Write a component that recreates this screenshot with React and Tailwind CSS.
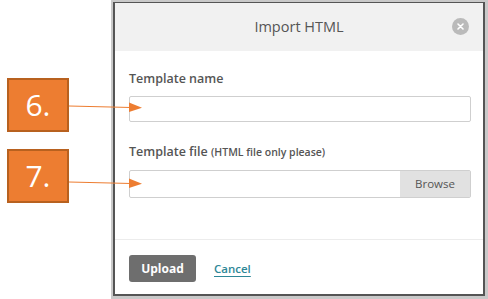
import React from 'react';

const font = { fontFamily: '"Open Sans", "Noto Sans", sans-serif' };

function Callout({ label }) {
  return (
    <div className="w-[62px] h-[54px] bg-[#ed7d31] border-2 border-[#b8611f] flex items-center justify-center text-white text-[30px] leading-none">
      {label}
    </div>
  );
}

function Arrow({ top }) {
  return (
    <svg className="absolute left-[69px]" style={{ top }} width="74" height="12" viewBox="0 0 74 12">
      <line x1="0" y1="5" x2="62" y2="6.5" stroke="#ed7d31" strokeWidth="1.2" />
      <polygon points="60,1.5 73,6.8 60,11" fill="#ed7d31" />
    </svg>
  );
}

export default function App() {
  return (
    <div className="relative w-[488px] h-[299px] bg-white flex overflow-hidden" style={font}>
      {/* Callouts column */}
      <div className="w-[111px] shrink-0 pl-[7px] pt-[78px] flex flex-col gap-[17px]">
        <Callout label="6." />
        <Callout label="7." />
      </div>

      {/* Dialog */}
      <div className="w-[377px] h-[299px] border-2 border-[#c9c9c9] border-r-[3px] border-b-[3px]">
        <div className="h-full border-2 border-[#555] border-t border-b-2 flex flex-col bg-white">
          <div className="relative h-[48px] bg-[#f1f1f1] flex items-center justify-center shrink-0">
            <span className="text-[14.5px] text-[#555] font-medium">Import HTML</span>
            <div className="absolute right-[14px] top-[15px] w-[17px] h-[17px] rounded-full bg-[#bababa] flex items-center justify-center">
              <svg width="7" height="7" viewBox="0 0 7 7">
                <path d="M1 1 L6 6 M6 1 L1 6" stroke="white" strokeWidth="1.6" strokeLinecap="round" />
              </svg>
            </div>
          </div>

          <div className="pl-[14px] pr-[12px] pt-[19px] flex flex-col">
            <div className="text-[12.5px] font-semibold text-[#555] leading-[18px]">Template name</div>
            <div className="mt-[8px] h-[26px] border border-[#cfcfcf] rounded-[2px] bg-white" />

            <div className="mt-[19px] leading-[18px] text-[#555]">
              <span className="text-[12.5px] font-semibold">Template file </span>
              <span className="text-[10.5px] font-semibold">(HTML file only please)</span>
            </div>
            <div className="mt-[9px] h-[28px] border border-[#cfcfcf] rounded-[2px] bg-white flex">
              <div className="flex-1" />
              <div className="w-[70px] bg-[#e1e1e1] flex items-center justify-center text-[11.5px] text-[#555] font-medium">
                Browse
              </div>
            </div>
          </div>

          <div className="mt-[41px] border-t border-[#ececec]" />

          <div className="pl-[14px] pt-[15px] flex items-center gap-[18px]">
            <div className="w-[67px] h-[27px] rounded-[3px] bg-[#6e6e6e] flex items-center justify-center text-white text-[12px] font-bold">
              Upload
            </div>
            <span className="text-[11.5px] font-semibold text-[#2e8797] underline underline-offset-[3px]">Cancel</span>
          </div>
        </div>
      </div>

      <Arrow top={101} />
      <Arrow top={177} />
    </div>
  );
}
